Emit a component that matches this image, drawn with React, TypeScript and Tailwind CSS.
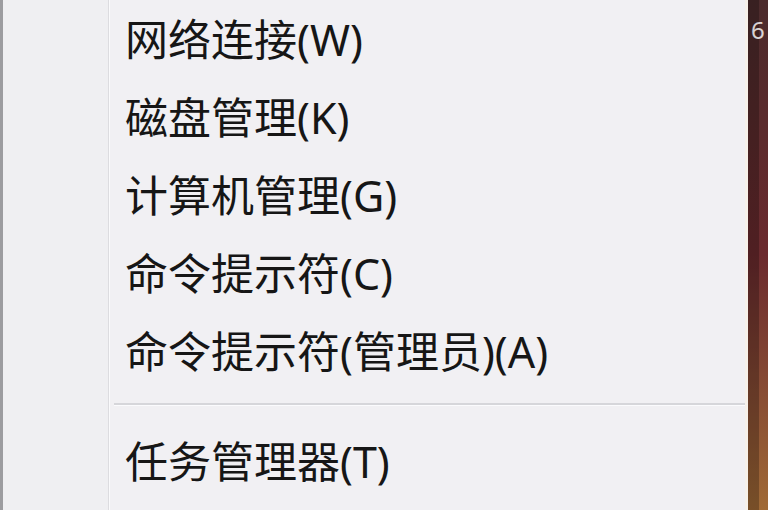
import React from "react";

const items = [
  { label: "网络连接", key: "W" },
  { label: "磁盘管理", key: "K" },
  { label: "计算机管理", key: "G" },
  { label: "命令提示符", key: "C" },
  { label: "命令提示符(管理员)", key: "A" },
];

function MenuItem({ label, hotkey }: { label: string; hotkey: string }) {
  return (
    <div className="h-[78px] flex items-center pl-[15px] text-[43px] leading-none text-[#161616]">
      <span>
        {label}({hotkey})
      </span>
    </div>
  );
}

export default function App() {
  return (
    <div
      className="w-[768px] h-[510px] flex overflow-hidden bg-[#f0eff2]"
      style={{ fontFamily: '"Noto Sans", "Noto Sans CJK SC", sans-serif' }}
    >
      {/* left edge */}
      <div className="w-[3px] bg-[#9c9ca0]" />
      {/* icon gutter */}
      <div className="w-[106px] bg-[#efeff2] border-r border-[#dcdce0]" />
      <div className="w-px bg-[#fafafc]" />

      {/* menu */}
      <div className="flex-1 flex flex-col bg-[#f1f0f3]">
        {items.map((it) => (
          <MenuItem key={it.key} label={it.label} hotkey={it.key} />
        ))}
        <div className="mt-[13px] mb-[16px] ml-[4px]">
          <div className="h-[2px] bg-[#d6d6da]" />
          <div className="h-px bg-[#fbfbfd]" />
        </div>
        <MenuItem label="任务管理器" hotkey="T" />
      </div>

      {/* menu right border */}
      <div className="w-[3px] bg-[#f7f1ea]" />

      {/* desktop behind */}
      <div className="relative w-[20px] bg-gradient-to-b from-[#4b2b2c] via-[#6b2a2e] to-[#a06a36]">
        <div className="absolute inset-y-0 left-0 w-[11px] bg-black/25" />
        <span className="absolute top-[18px] left-[3px] text-[24px] leading-none text-white/80">
          6
        </span>
      </div>
    </div>
  );
}
